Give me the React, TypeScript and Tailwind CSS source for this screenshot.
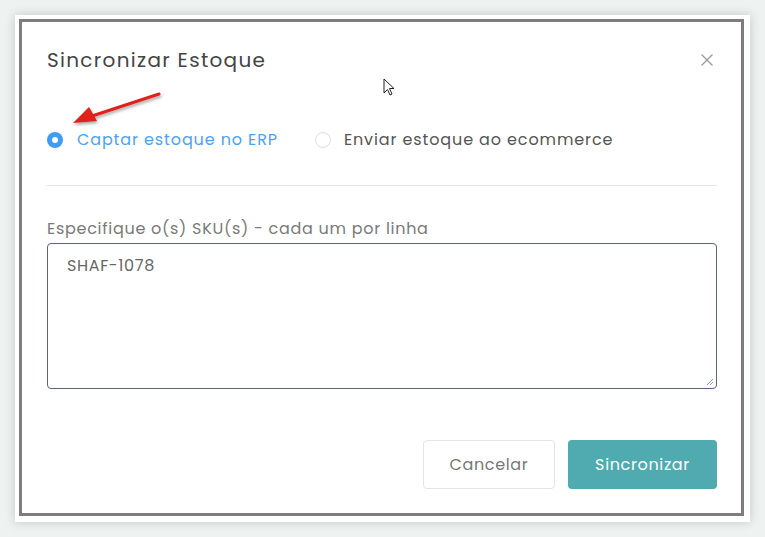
import React from "react";

export default function App() {
  const font = { fontFamily: "Poppins, Inter, 'Noto Sans', sans-serif" };
  return (
    <div className="w-[765px] h-[537px] bg-[#eef2f1] p-[15px] relative overflow-hidden" style={font}>
      <div className="w-[735px] h-[507px] bg-white pl-[4px] pt-[4px] pr-[6px] pb-[6px] shadow-[0_0_10px_rgba(0,0,0,0.18)]">
        <div className="h-full border-[3px] border-[#7d7d7d] pl-[25px] pr-[24px] pt-[24px] flex flex-col">
          <div className="flex items-center justify-between h-[28px]">
            <div className="text-[20px] text-[#444] tracking-[0.065em]">Sincronizar Estoque</div>
            <svg width="14" height="14" viewBox="0 0 14 14" className="mr-[3px]">
              <path d="M1.5 1.5 L12.5 12.5 M12.5 1.5 L1.5 12.5" stroke="#9a9a9a" strokeWidth="1.3" />
            </svg>
          </div>
          <div className="flex items-center mt-[52px] h-[28px] tracking-[0.055em]">
            <span className="w-[16px] h-[16px] rounded-full bg-[#3f9cf5] flex items-center justify-center">
              <span className="w-[6px] h-[6px] rounded-full bg-white" />
            </span>
            <span className="ml-[14px] text-[16px] text-[#4aa3f7]">Captar estoque no ERP</span>
            <span className="ml-[37px] w-[16px] h-[16px] rounded-full border border-[#dcdee6] bg-white" />
            <span className="ml-[13px] text-[16px] text-[#555]">Enviar estoque ao ecommerce</span>
          </div>
          <div className="mt-[31px] h-px bg-[#e2e5ec]" />
          <div className="mt-[33px] text-[16px] text-[#7a7a7a] leading-[20px] tracking-[0.045em]">
            Especifique o(s) SKU(s) - cada um por linha
          </div>
          <div className="mt-[4px] relative h-[146px] border-[1.5px] border-[#5c6478] rounded-[4px] px-[19px] pt-[11px]">
            <div className="text-[16px] text-[#666] leading-[22px] tracking-[0.04em]">SHAF-1078</div>
            <svg width="8" height="8" viewBox="0 0 8 8" className="absolute right-[2px] bottom-[2px]">
              <path d="M7 1 L1 7 M7 4 L4 7" stroke="#888" strokeWidth="0.9" />
            </svg>
          </div>
          <div className="mt-[51px] flex justify-end gap-[13px] tracking-[0.04em]">
            <button className="w-[132px] h-[49px] rounded-[4px] border border-[#e4e4ea] bg-white text-[16px] text-[#777]">
              Cancelar
            </button>
            <button className="w-[149px] h-[49px] rounded-[4px] bg-[#4fabb0] text-[16px] text-white">
              Sincronizar
            </button>
          </div>
        </div>
      </div>
      <svg className="absolute left-[60px] top-[85px]" width="110" height="45" viewBox="0 0 110 45">
        <defs>
          <filter id="sh" x="-20%" y="-50%" width="140%" height="200%">
            <feDropShadow dx="1" dy="2" stdDeviation="1.5" floodColor="#000" floodOpacity="0.35" />
          </filter>
        </defs>
        <g filter="url(#sh)">
          <path d="M99 9 L32 31" stroke="#e0201a" strokeWidth="3" strokeLinecap="round" />
          <path d="M13 38 L29 22 L37 36 Z" fill="#e0201a" />
        </g>
      </svg>
      <svg className="absolute left-[383px] top-[78px]" width="12" height="19" viewBox="0 0 12 19">
        <path d="M1 1 L1 15 L4.5 11.5 L7 17 L9 16 L6.5 10.5 L11 10.5 Z" fill="white" stroke="#222" strokeWidth="1" strokeLinejoin="round" />
      </svg>
    </div>
  );
}
